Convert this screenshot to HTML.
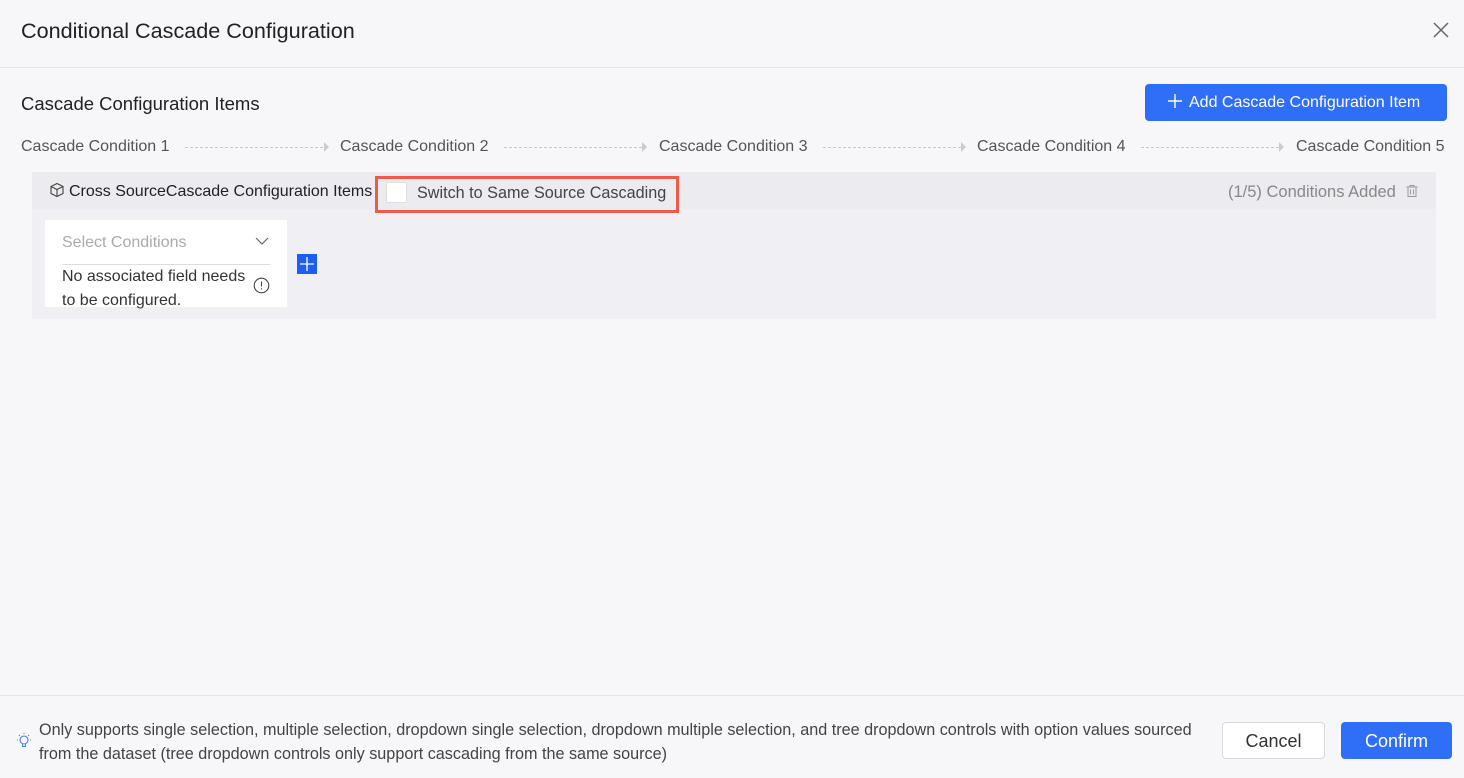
<!DOCTYPE html>
<html><head><style>
*{box-sizing:border-box;margin:0;padding:0}
body{width:1464px;height:778px;background:#f7f7f9;font-family:"Liberation Sans",sans-serif;color:#333;position:relative;overflow:hidden}
.a{position:absolute;white-space:nowrap}
</style></head><body>
<div class="a" style="left:21px;top:18px;font-size:21.6px;color:#222">Conditional Cascade Configuration</div>
<svg class="a" style="left:1433px;top:22px" width="16" height="16"><path d="M1 1L15 15M15 1L1 15" stroke="#666" stroke-width="1.5"/></svg>
<div class="a" style="left:0;top:67px;width:1464px;height:1px;background:#e3e3e8"></div>
<div class="a" style="left:21px;top:93px;font-size:18.5px;color:#222">Cascade Configuration Items</div>
<div class="a" style="left:1145px;top:84px;width:302px;height:37px;background:#2f6ef7;border-radius:4px;color:#fff;font-size:16px;line-height:37px;padding-left:22px"><svg width="16" height="16" style="vertical-align:-2px;margin-right:6px"><path d="M8 1V15M1 8H15" stroke="#fff" stroke-width="1.4"/></svg>Add Cascade Configuration Item</div>
<div class="a" style="left:21px;top:138px;font-size:16px;color:#555">Cascade Condition 1</div>
<div class="a" style="left:340px;top:138px;font-size:16px;color:#555">Cascade Condition 2</div>
<div class="a" style="left:659px;top:138px;font-size:16px;color:#555">Cascade Condition 3</div>
<div class="a" style="left:977px;top:138px;font-size:16px;color:#555">Cascade Condition 4</div>
<div class="a" style="left:1296px;top:138px;font-size:16px;color:#555">Cascade Condition 5</div>
<div class="a" style="left:185px;top:147px;width:138px;border-top:1px dashed #c8c8c8"></div><div class="a" style="left:324px;top:142px;border:5px solid transparent;border-left:5px solid #ccc"></div>
<div class="a" style="left:504px;top:147px;width:138px;border-top:1px dashed #c8c8c8"></div><div class="a" style="left:642px;top:142px;border:5px solid transparent;border-left:5px solid #ccc"></div>
<div class="a" style="left:823px;top:147px;width:138px;border-top:1px dashed #c8c8c8"></div><div class="a" style="left:961px;top:142px;border:5px solid transparent;border-left:5px solid #ccc"></div>
<div class="a" style="left:1141px;top:147px;width:138px;border-top:1px dashed #c8c8c8"></div><div class="a" style="left:1279px;top:142px;border:5px solid transparent;border-left:5px solid #ccc"></div>
<div class="a" style="left:32px;top:172px;width:1404px;height:37px;background:#ebebf0"></div>
<div class="a" style="left:32px;top:209px;width:1404px;height:110px;background:#f0f0f4"></div>
<svg class="a" style="left:49px;top:182px" width="16" height="16" fill="none" stroke="#444" stroke-width="1.1"><path d="M8 1.5L14 4.5V11.5L8 14.5L2 11.5V4.5Z M2 4.5L8 7.5L14 4.5 M8 7.5V14.5"/></svg>
<div class="a" style="left:69px;top:183px;font-size:16px;color:#222">Cross SourceCascade Configuration Items</div>
<div class="a" style="left:375px;top:176px;width:304px;height:37px;border:3px solid #f05a4a"></div>
<div class="a" style="left:386px;top:182px;width:21px;height:21px;background:#fff;border:1px solid #ddd;border-radius:2px"></div>
<div class="a" style="left:417px;top:184px;font-size:16.2px;color:#444">Switch to Same Source Cascading</div>
<div class="a" style="left:1228px;top:183px;font-size:16.5px;color:#888">(1/5) Conditions Added</div>
<svg class="a" style="left:1405px;top:184px" width="14" height="14" fill="none" stroke="#999" stroke-width="1"><path d="M1.5 3H12.5M5 3V1.5H9V3M3 3V12.5H11V3M5.5 5.5V10.5M8.5 5.5V10.5"/></svg>
<div class="a" style="left:45px;top:220px;width:242px;height:87px;background:#fff"></div>
<div class="a" style="left:62px;top:234px;font-size:16px;color:#aaa">Select Conditions</div>
<svg class="a" style="left:255px;top:237px" width="14" height="9" fill="none" stroke="#666" stroke-width="1.2"><path d="M1 1L7 7L13 1"/></svg>
<div class="a" style="left:62px;top:264px;width:208px;height:1px;background:#ddd"></div>
<div class="a" style="left:62px;top:265px;font-size:16px;line-height:24px;color:#333">No associated field needs<br>to be configured.</div>
<svg class="a" style="left:253px;top:277px" width="17" height="17" fill="none" stroke="#444" stroke-width="1.1"><circle cx="8.5" cy="8.5" r="7.3"/><path d="M8.5 4.5V9.5M8.5 11.3V12.5"/></svg>
<div class="a" style="left:297px;top:254px;width:20px;height:20px;background:#1d5cf5"></div>
<svg class="a" style="left:297px;top:254px" width="20" height="20"><path d="M10 3V17M3 10H17" stroke="#fff" stroke-width="1.3"/></svg>
<div class="a" style="left:0;top:695px;width:1464px;height:1px;background:#e3e3e8"></div>
<svg class="a" style="left:15px;top:732px" width="18" height="18" fill="none" stroke="#4a80f5" stroke-width="1.1"><circle cx="9" cy="8" r="4"/><path d="M7.5 12.5V14.5H10.5V12.5M2 8H3M15 8H16M4 3L4.8 3.8M14 3L13.2 3.8M9 1V2"/></svg>
<div class="a" style="left:39px;top:718px;font-size:16.2px;line-height:24px;color:#444">Only supports single selection, multiple selection, dropdown single selection, dropdown multiple selection, and tree dropdown controls with option values sourced<br>from the dataset (tree dropdown controls only support cascading from the same source)</div>
<div class="a" style="left:1222px;top:722px;width:103px;height:37px;background:#fff;border:1px solid #d8d8dd;border-radius:4px;font-size:18px;line-height:37px;text-align:center;color:#333">Cancel</div>
<div class="a" style="left:1341px;top:722px;width:111px;height:37px;background:#2f6ef7;border-radius:4px;font-size:18px;line-height:39px;text-align:center;color:#fff">Confirm</div>
</body></html>
